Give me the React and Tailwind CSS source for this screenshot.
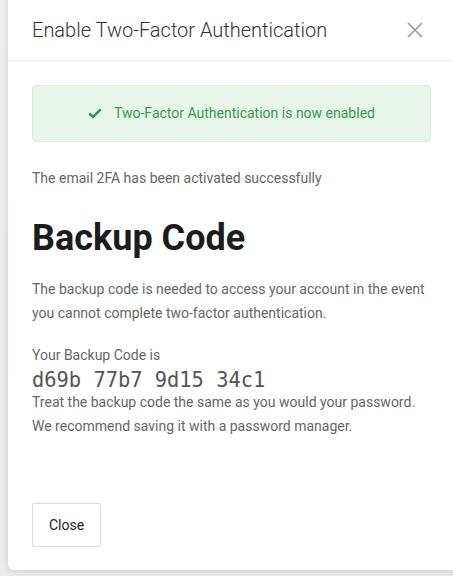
import { useState } from 'react';

export default function App() {
  const [open, setOpen] = useState(true);

  return (
    <div className="relative h-[576px] w-[453px] overflow-hidden bg-[#ececec] font-['Roboto',sans-serif]">
      {/* backdrop tint */}
      <div className="absolute inset-0 bg-gradient-to-b from-[#efefef] via-[#e9eaee] to-[#ebebeb]"></div>

      {/* Modal */}
      <div className="relative ml-[8px] mt-[-6px] h-[576px] w-[460px] rounded-[6px] bg-white shadow-[0_1px_6px_rgba(0,0,0,0.12)]">
        <div className="flex h-[67px] items-center justify-between border-b border-[#e9ecef] pl-[24px] pr-[45px] pt-[6px]">
          <h2 className="text-[20px] font-light text-[#333]">Enable Two-Factor Authentication</h2>
          <button onClick={() => setOpen(!open)} className="text-[#9a9a9a]">
            <svg width="16" height="16" viewBox="0 0 16 16" fill="none" stroke="currentColor" strokeWidth="1.6">
              <path d="M1 1 L15 15 M15 1 L1 15" />
            </svg>
          </button>
        </div>

        <div className="pl-[24px] pr-[37px]">
          <div className="mt-[24px] flex h-[57px] items-center justify-center gap-[12px] rounded-[4px] border border-[#d6efd8] bg-[#e7f6e8] text-[14px] text-[#3a9a4f]">
            <svg width="14" height="11" viewBox="0 0 14 11" fill="none" stroke="#2f9a4a" strokeWidth="2.6">
              <path d="M1.3 5.5 L5 9 L12.7 1.3" />
            </svg>
            <span>Two-Factor Authentication is now enabled</span>
          </div>

          <p className="mt-[26px] text-[14px] text-[#666]">The email 2FA has been activated successfully</p>

          <h1 className="mt-[27px] text-[36px] font-bold leading-[44px] text-[#1c1c1c]">Backup Code</h1>

          <p className="mt-[17px] text-[14px] leading-[24px] text-[#666]">
            The backup code is needed to access your account in the event you cannot complete two-factor authentication.
          </p>

          <p className="mt-[18px] text-[14px] leading-[24px] text-[#666]">Your Backup Code is</p>
          <p className="mt-[3px] font-['DejaVu_Sans_Mono',monospace] text-[20.4px] leading-[20px] text-[#555]">d69b 77b7 9d15 34c1</p>
          <p className="text-[14px] leading-[24px] text-[#666]">
            Treat the backup code the same as you would your password.
            <br />
            We recommend saving it with a password manager.
          </p>

          <button className="mt-[65px] h-[44px] w-[69px] rounded-[2px] border border-[#dcdcdc] bg-white text-[14px] text-[#222]">
            Close
          </button>
        </div>
      </div>
    </div>
  );
}
